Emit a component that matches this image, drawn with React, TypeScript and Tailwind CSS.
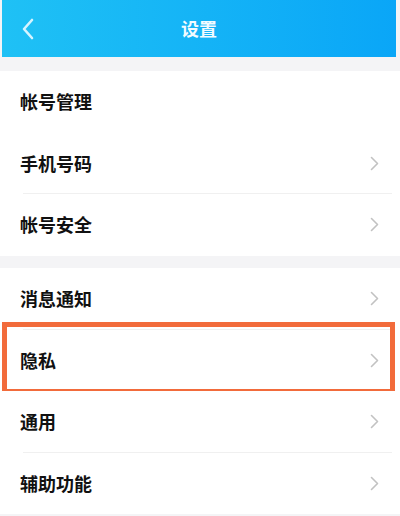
const GROUPS: { label: string; arrow: boolean; highlight?: boolean; divider?: boolean }[][] = [
  [
    { label: '帐号管理', arrow: false },
    { label: '手机号码', arrow: true, divider: true },
    { label: '帐号安全', arrow: true },
  ],
  [
    { label: '消息通知', arrow: true, divider: true },
    { label: '隐私', arrow: true, highlight: true },
    { label: '通用', arrow: true, divider: true },
    { label: '辅助功能', arrow: true },
  ],
];

function Chevron() {
  return (
    <svg width="9" height="15" viewBox="0 0 9 15" fill="none">
      <polyline
        points="1.5,1.5 7.5,7.5 1.5,13.5"
        stroke="#c2c2c2"
        strokeWidth="1.6"
        strokeLinecap="round"
        strokeLinejoin="round"
      />
    </svg>
  );
}

function Row({
  label,
  arrow,
  highlight,
  divider,
}: {
  label: string;
  arrow: boolean;
  highlight?: boolean;
  divider?: boolean;
}) {
  return (
    <div className="relative flex h-[61.5px] items-center justify-between bg-white pl-[20px] pr-[21px]">
      <span className="text-[18px] font-semibold text-[#111]">{label}</span>
      {arrow && <Chevron />}
      {divider && (
        <div className="absolute bottom-0 left-[23px] right-[8px] h-px bg-[#f0f0f0]" />
      )}
      {highlight && (
        <div className="pointer-events-none absolute -top-[8px] -bottom-[3px] left-[2px] right-[5px] border-[5px] border-[#f26b3b]" />
      )}
    </div>
  );
}

export default function App() {
  return (
    <div
      className="h-[516px] w-[400px] overflow-hidden bg-[#f4f4f6]"
      style={{ fontFamily: '"Noto Sans CJK SC", "Noto Sans", sans-serif' }}
    >
      <div className="ml-[2px] flex h-[57px] w-[394px] items-center bg-gradient-to-r from-[#1fc1f5] to-[#0aa6f7]">
        <div className="flex w-[60px] items-center pl-[19px]">
          <svg width="14" height="22" viewBox="0 0 14 22" fill="none">
            <polyline
              points="11,2 3,11 11,20"
              stroke="#d6f4ff"
              strokeWidth="2.6"
              strokeLinecap="round"
              strokeLinejoin="round"
            />
          </svg>
        </div>
        <div className="flex-1 text-center text-[18px] font-semibold text-[#f2fbff]">设置</div>
        <div className="w-[60px]" />
      </div>

      <div className="mt-[14px] flex flex-col gap-[12.5px]">
        {GROUPS.map((group, gi) => (
          <div key={gi} className="flex flex-col">
            {group.map((item) => (
              <Row
                key={item.label}
                label={item.label}
                arrow={item.arrow}
                highlight={item.highlight}
                divider={item.divider}
              />
            ))}
          </div>
        ))}
      </div>
    </div>
  );
}
